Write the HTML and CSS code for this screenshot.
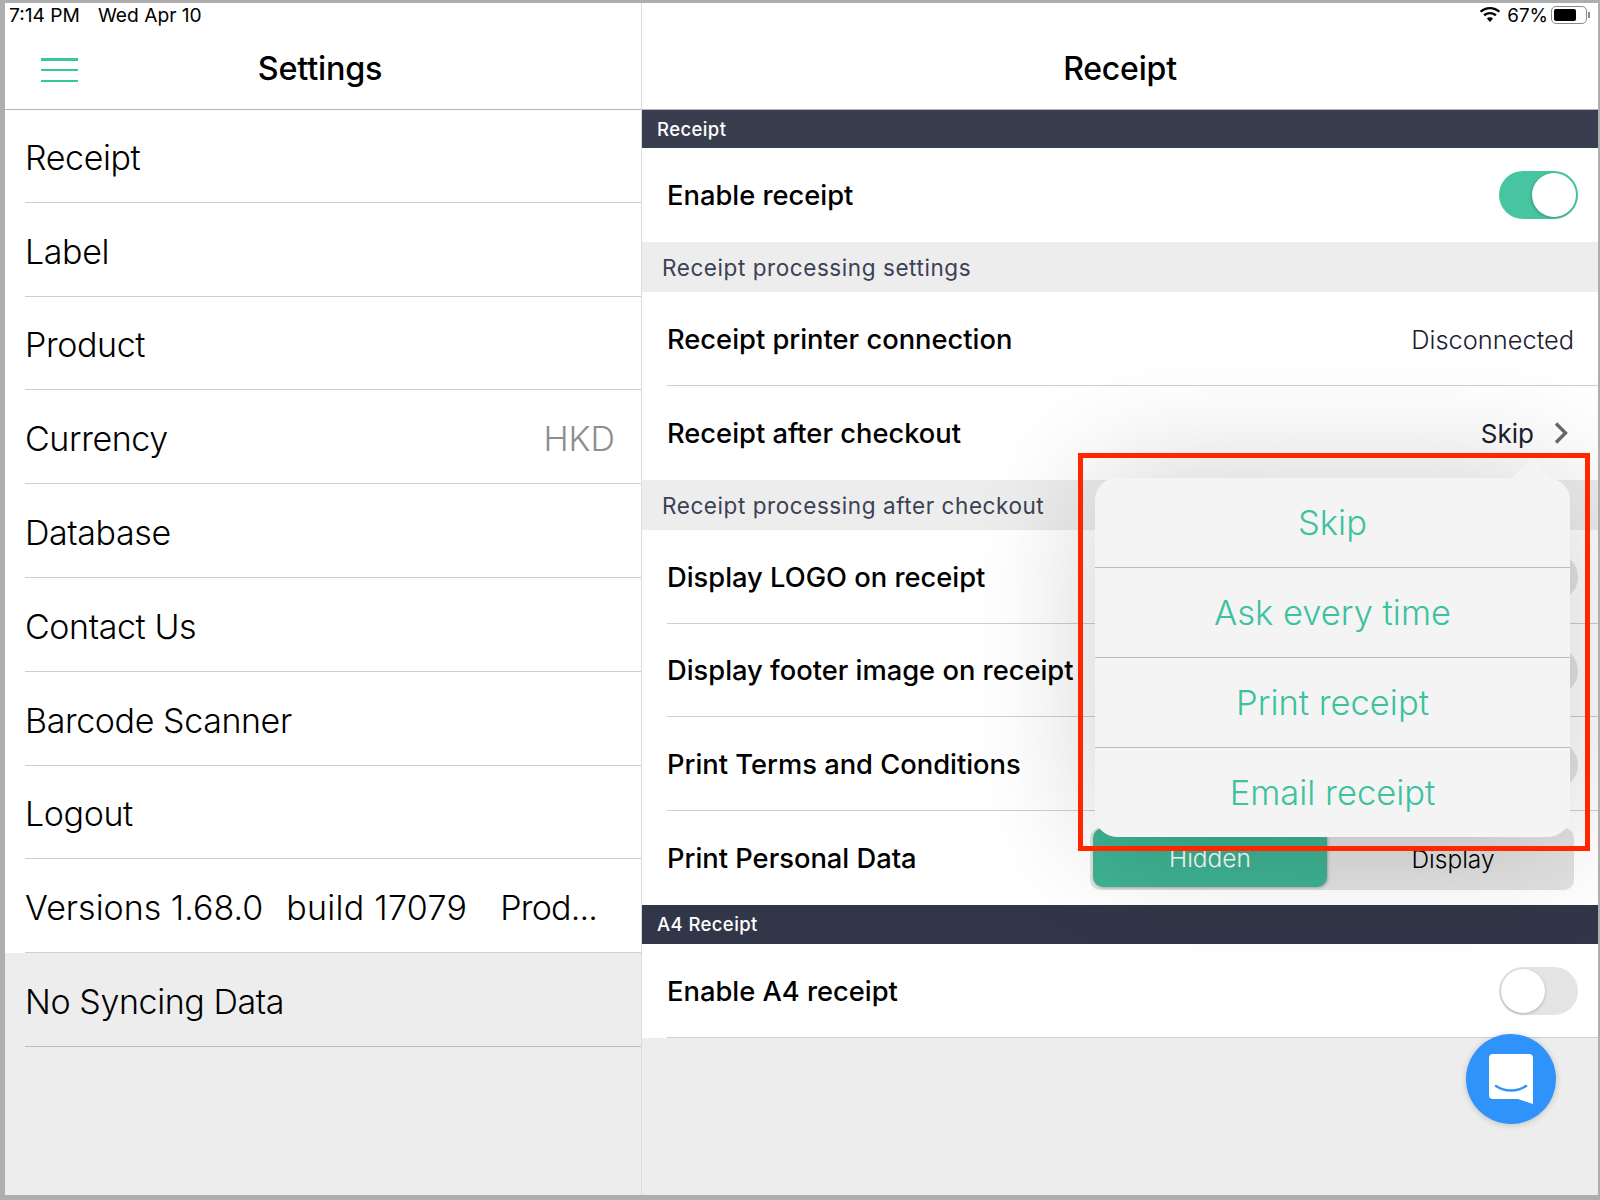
FILE: index.html
```html
<!DOCTYPE html>
<html lang="en">
<head>
<meta charset="utf-8">
<title>Receipt settings</title>
<link rel="stylesheet" href="styles.css">
</head>
<body>
<div class="screen">
  <div class="status">
    <div class="status-left"><span>7:14 PM</span><span>Wed Apr 10</span></div>
    <div class="status-right">
      <svg class="wifi" viewBox="0 0 22 16" width="22" height="16"><path d="M11 2.2c3.3 0 6.3 1.3 8.6 3.4l1.6-1.7C18.5 1.400 14.900 0 11 0S3.500 1.400.8 3.900l1.600 1.700C4.700 3.500 7.700 2.200 11 2.200zM11 7.300c1.900 0 3.700.7 5 2l1.700-1.800C15.900 5.800 13.600 4.900 11 4.900s-4.900.9-6.700 2.600L6 9.300c1.300-1.300 3.100-2 5-2zM11 10.200c-1.200 0-2.300.5-3.100 1.200L11 15l3.100-3.600c-.8-.7-1.900-1.200-3.100-1.200z" fill="#000"/></svg>
      <span>67%</span>
      <div class="battery"><div class="battery-fill"></div></div>
      <div class="battery-nub"></div>
    </div>
  </div>
  <div class="panes">
    <aside class="side">
      <header class="bar">
        <div class="burger"><i></i><i></i><i></i></div>
        <h1 class="title">Settings</h1>
      </header>
      <ul class="menu">
        <li class="menu-item"><span>Receipt</span></li>
        <li class="menu-item"><span>Label</span></li>
        <li class="menu-item"><span>Product</span></li>
        <li class="menu-item"><span>Currency</span><span class="muted">HKD</span></li>
        <li class="menu-item"><span>Database</span></li>
        <li class="menu-item"><span>Contact Us</span></li>
        <li class="menu-item"><span>Barcode Scanner</span></li>
        <li class="menu-item"><span>Logout</span></li>
        <li class="menu-item"><span class="version"><span>Versions 1.68.0</span><span class="build">build 17079</span><span class="prod">Prod...</span></span></li>
        <li class="menu-item menu-gray"><span>No Syncing Data</span></li>
      </ul>
    </aside>
    <main class="detail">
      <header class="bar"><h1 class="title">Receipt</h1></header>
      <div class="dark">Receipt</div>
      <div class="row row-flush"><b>Enable receipt</b><span class="toggle on"></span></div>
      <div class="sub">Receipt processing settings</div>
      <div class="row"><b>Receipt printer connection</b><span class="value">Disconnected</span></div>
      <div class="row row-flush"><b>Receipt after checkout</b>
        <span class="value pick">Skip
          <svg viewBox="0 0 14 22" width="14" height="22"><path d="M2 1.500l9.500 9.500-9.500 9.500" fill="none" stroke="#6a6a6a" stroke-width="3.400"/></svg>
        </span>
      </div>
      <div class="sub">Receipt processing after checkout</div>
      <div class="row"><b>Display LOGO on receipt</b><span class="toggle"></span></div>
      <div class="row"><b>Display footer image on receipt</b><span class="toggle"></span></div>
      <div class="row"><b>Print Terms and Conditions</b><span class="toggle"></span></div>
      <div class="row row-flush"><b>Print Personal Data</b>
        <div class="segment"><span class="seg seg-on">Hidden</span><span class="seg seg-off">Display</span></div>
      </div>
      <div class="dark dark-a4">A4 Receipt</div>
      <div class="row"><b>Enable A4 receipt</b><span class="toggle"></span></div>
    </main>
  </div>

  <div class="popover">
    <div class="pop-item">Skip</div>
    <div class="pop-item">Ask every time</div>
    <div class="pop-item">Print receipt</div>
    <div class="pop-item">Email receipt</div>
  </div>
  <div class="highlight"></div>
  <div class="chat">
    <svg viewBox="0 0 44 50" width="44" height="50"><path d="M4 0h36a4 4 0 0 1 4 4v46l-15-5H4a4 4 0 0 1-4-4V4a4 4 0 0 1 4-4z" fill="#fff"/><path d="M7 32c9 6 21 6 30 0" fill="none" stroke="#3092fb" stroke-width="2.500" stroke-linecap="round"/></svg>
  </div>
</div>
</body>
</html>
```
FILE: styles.css
```css
* { box-sizing: border-box; }
html, body { margin: 0; padding: 0; }
body {
  width: 1600px;
  height: 1200px;
  background: #aeaeae;
  font-family: Inter, "Liberation Sans", sans-serif;
  color: #000;
  overflow: hidden;
}
.screen {
  position: relative;
  width: 1593px;
  height: 1192px;
  margin: 3px 2px 5px 5px;
  background: #ededed;
  overflow: hidden;
}
.status {
  position: absolute;
  left: 0; right: 0; top: 0;
  height: 24px;
  display: flex;
  justify-content: space-between;
  align-items: center;
  font-size: 19.200px;
  padding: 0 0 0 4px;
  z-index: 2;
}
.status-left { display: flex; gap: 18px; }
.status-right { display: flex; align-items: center; position: relative; padding-right: 8px; font-size: 18.800px; }
.wifi { margin-right: 6px; }
.battery {
  width: 36px; height: 18px;
  margin-left: 3px;
  border: 1.500px solid #8a8a8a;
  border-radius: 5px;
  padding: 2px;
}
.battery-fill { width: 22px; height: 100%; background: #000; border-radius: 2px; }
.battery-nub { width: 2px; height: 6px; background: #8a8a8a; margin-left: 1px; }
.panes { display: flex; height: 100%; }
.side {
  width: 637px;
  flex: none;
  border-right: 1px solid #dcdcdc;
}
.detail { flex: 1; }
.bar {
  position: relative;
  height: 107px;
  background: #fff;
  padding-top: 24px;
  border-bottom: 1px solid #b4b4b4;
  display: flex;
  align-items: center;
  justify-content: center;
}
.title {
  margin: 0;
  font-size: 32.400px;
  font-weight: 500;
  letter-spacing: -.2px;
}
.detail .title { font-size: 32px; }
.side .title { margin-right: 6px; }
.burger {
  position: absolute;
  left: 36px; top: 55px;
  width: 37px; height: 24px;
  display: flex;
  flex-direction: column;
  justify-content: space-between;
}
.burger i { display: block; height: 2.500px; background: #36c6a0; }
.menu { list-style: none; margin: 0; padding: 0; }
.menu-item {
  height: 93.800px;
  background: #fff;
  padding: 3px 26px 0 20px;
  display: flex;
  align-items: center;
  justify-content: space-between;
  font-size: 34px;
  font-weight: 300;
  letter-spacing: -.4px;
  position: relative;
}
.menu-item:first-child { height: 92.800px; padding-top: 3px; }
.menu-item::after {
  content: "";
  position: absolute;
  left: 20px; right: 0; bottom: 0;
  height: 1px;
  background: #cfcfcf;
}
.menu-gray { background: #ededed; }
.menu-gray::after { background: #bcbcbc; }
.muted { color: #8e8e8e; letter-spacing: 0; }
.version { display: flex; gap: 23px; letter-spacing: 0; }
.build { letter-spacing: .3px; }
.prod { margin-left: 10px; letter-spacing: -.8px; }
.dark {
  height: 38px;
  background: #383e4e;
  color: #fff;
  font-size: 18.500px;
  font-weight: 500;
  letter-spacing: .4px;
  padding-left: 15px;
  display: flex;
  align-items: center;
}
.dark-a4 { height: 39px; background: #313748; }
.sub {
  height: 50.200px;
  background: #ededed;
  color: #3a4154;
  font-size: 22.500px;
  letter-spacing: .57px;
  padding: 1px 0 0 20px;
  display: flex;
  align-items: center;
}
.row {
  height: 93.800px;
  background: #fff;
  padding: 1px 20px 0 25px;
  display: flex;
  align-items: center;
  justify-content: space-between;
  position: relative;
}
.row::after {
  content: "";
  position: absolute;
  left: 25px; right: 0; bottom: 0;
  height: 1px;
  background: #cfcfcf;
}
.row-flush::after { display: none; }
.row b { font-size: 27.300px; font-weight: 500; }
.value { font-size: 25.400px; font-weight: 300; color: #1a2030; margin-right: 4px; }
.pick { display: flex; align-items: center; gap: 20px; margin-right: 10px; font-size: 26px; font-weight: 400; }
.toggle {
  width: 79px; height: 48px;
  border-radius: 24px;
  background: #e4e4e4;
  position: relative;
  flex: none;
}
.toggle::after {
  content: "";
  position: absolute;
  left: 2px; top: 2px;
  width: 44px; height: 44px;
  border-radius: 50%;
  background: #fff;
  box-shadow: 0 1px 3px rgba(0, 0, 0, .25);
}
.toggle.on { background: #47c4a0; }
.toggle.on::after { left: 33px; box-shadow: -1px 1px 3px rgba(0, 0, 0, .2); }
.segment {
  width: 484px; height: 62px;
  margin-right: 4px;
  margin-top: 1px;
  padding-left: 3px;
  background: #e2e2e2;
  border-radius: 10px;
  display: flex;
  font-size: 24.500px;
  font-weight: 300;
}
.seg { flex: 1; display: flex; align-items: center; justify-content: center; }
.seg-off { padding-left: 5px; }
.seg-on {
  flex: none;
  width: 234px; height: 59px;
  background: #3eb292;
  color: #fff;
  border-radius: 10px;
  box-shadow: 1px 1px 3px rgba(0, 0, 0, .25);
}
.popover {
  position: absolute;
  left: 1090px; top: 475px;
  width: 475px; height: 359px;
  background: #f4f4f4;
  border-radius: 22px;
  box-shadow: 0 0 130px rgba(0, 0, 0, .2);
  z-index: 3;
}
.popover::before {
  content: "";
  position: absolute;
  left: 416px; top: -20px;
  width: 43px; height: 21px;
  background: #f4f4f4;
  clip-path: polygon(50% 0, 100% 100%, 0 100%);
}
.pop-item {
  height: 90px;
  display: flex;
  align-items: center;
  justify-content: center;
  color: #3cc29e;
  font-size: 34.500px;
  font-weight: 350;
  border-bottom: 1px solid #bcbcbc;
}
.pop-item:last-child { border-bottom: 0; height: 89px; }
.highlight {
  position: absolute;
  left: 1073px; top: 450px;
  width: 512px; height: 398px;
  border: 5px solid #ff2600;
  z-index: 4;
}
.chat {
  position: absolute;
  left: 1461px; top: 1031px;
  width: 90px; height: 90px;
  border-radius: 50%;
  background: #3092fb;
  box-shadow: 0 1px 6px rgba(0, 0, 0, .2);
  display: flex;
  align-items: center;
  justify-content: center;
  z-index: 3;
}
```
